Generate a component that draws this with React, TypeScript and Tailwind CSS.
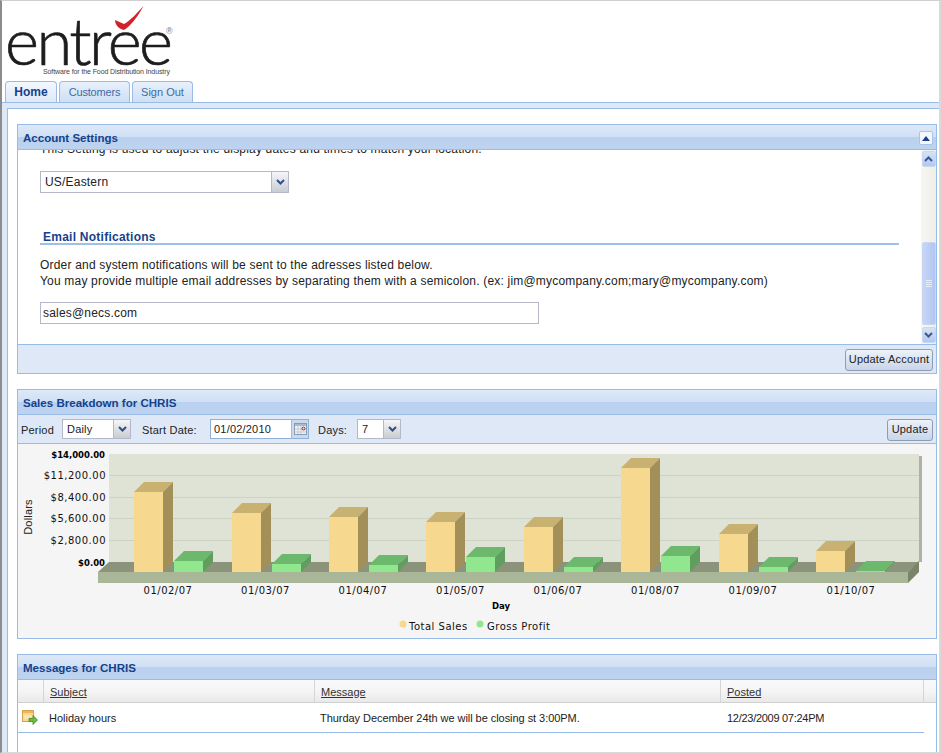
import React from "react";

const gridY = [475, 497, 518, 540];
const bars: [number, number, number, string][] = [
  [134, 492, 561, "01/02/07"],
  [232, 513, 564, "01/03/07"],
  [329, 517, 565, "01/04/07"],
  [426, 522, 557, "01/05/07"],
  [524, 527, 567, "01/06/07"],
  [621, 468, 556, "01/08/07"],
  [719, 534, 567, "01/09/07"],
  [816, 551, 571, "01/10/07"],
];
const labelX = [168, 265.5, 363, 460.5, 558, 655.5, 753, 851];

function Bar({ x, top, front, side, cap }: { x: number; top: number; front: string; side: string; cap: string }) {
  const w = 29;
  return (
    <g>
      <polygon points={`${x},${top} ${x + 10},${top - 10} ${x + w + 10},${top - 10} ${x + w},${top}`} fill={cap} />
      <polygon points={`${x + w},${top} ${x + w + 10},${top - 10} ${x + w + 10},562 ${x + w},572`} fill={side} />
      <rect x={x} y={top} width={w} height={572 - top} fill={front} />
    </g>
  );
}

function Chart() {
  const t = "font-['DejaVu_Sans',sans-serif] text-[10px] tracking-[0.5px] fill-[#111111]";
  const tb = "font-['DejaVu_Sans',sans-serif] text-[8.5px] font-bold fill-[#000000]";
  return (
    <svg viewBox="18 444 918 194" className="block h-[194px] w-[918px]">
      <rect x="919" y="456" width="3" height="106" fill="#aeb1a6" />
      <rect x="109" y="454" width="810" height="108" fill="#dee3d5" />
      {gridY.map((y) => (
        <rect key={y} x="109" y={y} width="810" height="1" fill="#cdd3c2" />
      ))}
      <polygon points="109,562 919,562 908,572 98,572" fill="#8b937b" />
      <rect x="98" y="572" width="810" height="11" fill="#a9b697" />
      <polygon points="908,572 919,561 919,572 908,583" fill="#7b8368" />
      {bars.map(([x, y, g]) => (
        <g key={x}>
          <Bar x={x} top={y} front="#f6d98e" side="#a39059" cap="#c9b171" />
          <Bar x={x + 40} top={g} front="#90e78d" side="#5f9e5e" cap="#6cb86d" />
        </g>
      ))}
      <text x="105" y="458" textAnchor="end" className={tb}>$14,000.00</text>
      <text x="106" y="479" textAnchor="end" className={t}>$11,200.00</text>
      <text x="106" y="501" textAnchor="end" className={t}>$8,400.00</text>
      <text x="106" y="522" textAnchor="end" className={t}>$5,600.00</text>
      <text x="106" y="544" textAnchor="end" className={t}>$2,800.00</text>
      <text x="105" y="566" textAnchor="end" className={tb}>$0.00</text>
      <text transform="translate(32 517) rotate(-90)" textAnchor="middle" className="font-['Liberation_Sans',sans-serif] text-[11px] tracking-[0.2px] fill-[#222222]">Dollars</text>
      {bars.map(([x, , , l], i) => (
        <text key={l} x={labelX[i]} y="594" textAnchor="middle" className={t}>{l}</text>
      ))}
      <text x="501" y="609" textAnchor="middle" className={tb}>Day</text>
      <circle cx="403" cy="624" r="3.5" fill="#f6d98e" />
      <text x="409" y="630" className={t}>Total Sales</text>
      <circle cx="480" cy="624" r="3.5" fill="#90e78d" />
      <text x="487" y="630" className={t}>Gross Profit</text>
    </svg>
  );
}

function Chevron() {
  return (
    <svg width="9" height="6" viewBox="0 0 9 6">
      <path d="M1 1l3.5 3.5L8 1" fill="none" stroke="#2f4f86" strokeWidth="2" />
    </svg>
  );
}

function Select({ value, w, text = "text-[11px] leading-[19px] tracking-[0.2px]", h = "h-5" }: { value: string; w: string; text?: string; h?: string }) {
  return (
    <div className={`flex ${w} ${h} items-stretch border border-[#b5b8c8] bg-white`}>
      <span className={`flex-1 truncate pl-1 ${text} text-[#222222]`}>{value}</span>
      <span className="flex w-[17px] items-center justify-center border-l border-[#b5b8c8] bg-[linear-gradient(to_bottom,#f4f6f9,#c9ccd2)]">
        <Chevron />
      </span>
    </div>
  );
}

function Button({ label, w }: { label: string; w: string }) {
  return (
    <button className={`mt-[1px] h-[22px] ${w} rounded-[3px] border border-[#8d9db3] bg-[linear-gradient(to_bottom,#eef3fa,#d9e3f1_50%,#c9d6e8)] text-[11px] tracking-[0.2px] text-[#222222]`}>
      {label}
    </button>
  );
}

function Panel({ title, h, collapse, children }: { title: string; h: string; collapse?: boolean; children: React.ReactNode }) {
  return (
    <section className={`flex ${h} w-[920px] shrink-0 flex-col overflow-hidden border border-[#99bbe8] bg-white`}>
      <header className="relative z-10 flex h-[25px] shrink-0 items-center border-b border-[#99bbe8] bg-[linear-gradient(to_bottom,#dce9f8,#d0e0f5_48%,#b9d0ef_48%,#bdd3f0)] pl-[5px] pt-[4px]">
        <h2 className="text-[11.55px] font-bold leading-none text-[#15428b]">{title}</h2>
        {collapse && (
          <span className="absolute right-[3px] top-[6px] flex h-[14px] w-[14px] items-center justify-center rounded-[2px] border border-[#a9c4ea] bg-[#f3f8fe]">
            <svg width="8" height="5" viewBox="0 0 8 5"><path d="M4 0l4 5H0z" fill="#1f3f86" /></svg>
          </span>
        )}
      </header>
      {children}
    </section>
  );
}

function Scrollbar() {
  const btn = "flex h-[16px] w-[14px] items-center justify-center rounded-[2px] border border-[#c9d9f0] bg-[linear-gradient(to_bottom,#d5e2f8,#b3c8f0)]";
  const chev = <path d="M1 5l3.5-3.5L8 5" fill="none" stroke="#3c5a8c" strokeWidth="2" />;
  return (
    <div className="flex w-[15px] shrink-0 flex-col items-center bg-[linear-gradient(to_right,#f7f6f0,#efeee8)] pt-[1px]">
      <span className={btn}><svg width="9" height="6" viewBox="0 0 9 6">{chev}</svg></span>
      <div className="mt-[75px] flex h-[83px] w-[14px] items-center justify-center rounded-[2px] border border-[#c9d5f2] bg-[linear-gradient(to_right,#c6d6f8,#b2c6f2)]">
        <div className="flex flex-col gap-[1px]">
          <i className="block h-px w-[6px] bg-[#e6edfb]" />
          <i className="block h-px w-[6px] bg-[#e6edfb]" />
          <i className="block h-px w-[6px] bg-[#e6edfb]" />
          <i className="block h-px w-[6px] bg-[#e6edfb]" />
        </div>
      </div>
      <span className={`${btn} mt-[2px]`}>
        <svg width="9" height="6" viewBox="0 0 9 6"><path d="M1 1l3.5 3.5L8 1" fill="none" stroke="#3c5a8c" strokeWidth="2" /></svg>
      </span>
    </div>
  );
}

function AccountSettings() {
  return (
    <Panel title="Account Settings" h="h-[250px]" collapse>
      <div className="flex h-[194px] shrink-0">
        <div className="min-w-0 flex-1 overflow-hidden pl-[22px] text-[12px] leading-[16px] tracking-[0.19px] text-[#222222]">
          <p className="-mt-[9px] whitespace-nowrap">This Setting is used to adjust the display dates and times to match your location.</p>
          <Select value="US/Eastern" w="w-[249px] mt-[14px]" h="h-[22px]" text="text-[12px] leading-[20px] tracking-[0.19px]" />
          <h3 className="mt-[38px] w-[859px] border-b-2 border-[#9fc0e6] pl-[3px] text-[12px] font-bold leading-[12px] tracking-[0.25px] text-[#15428b]">Email Notifications</h3>
          <p className="mt-[12px]">Order and system notifications will be sent to the adresses listed below.</p>
          <p>You may provide multiple email addresses by separating them with a semicolon. (ex: jim@mycompany.com;mary@mycompany.com)</p>
          <div className="mt-[13px] h-[22px] w-[499px] border border-[#b5b8c8] pl-[2px] leading-[20px]">sales@necs.com</div>
        </div>
        <Scrollbar />
      </div>
      <footer className="flex flex-1 items-center justify-end border-t border-[#99bbe8] bg-[#dfe8f6] pr-[3px]">
        <Button label="Update Account" w="w-[88px]" />
      </footer>
    </Panel>
  );
}

function SalesBreakdown() {
  return (
    <Panel title="Sales Breakdown for CHRIS" h="h-[250px]">
      <div className="flex h-[29px] shrink-0 items-center border-b border-[#99bbe8] bg-[#dfe8f6] px-[3px] text-[11px] tracking-[0.2px] text-[#222222]">
        <span className="w-[41px] pt-[2px]">Period</span>
        <Select value="Daily" w="w-[69px]" />
        <span className="ml-[11px] w-[68px] pt-[2px]">Start Date:</span>
        <div className="flex h-[20px] w-[99px] border border-[#8fb0d9] bg-white">
          <span className="flex-1 pl-[3px] leading-[19px]">01/02/2010</span>
          <span className="flex w-[17px] items-center justify-center border-l border-[#99bbe8] bg-[#c9d9ee]">
            <svg width="13" height="12" viewBox="0 0 13 12">
              <rect x=".5" y=".5" width="12" height="11" fill="#f3f3f3" stroke="#8a9ab0" />
              <rect x="1" y="1" width="11" height="2" fill="#a9b9d0" />
              <path d="M1 6h11M1 9h11M4 3v8M7 3v8" stroke="#c3c9d2" />
              <circle cx="9.5" cy="5.5" r="1.5" fill="none" stroke="#9c2030" />
            </svg>
          </span>
        </div>
        <span className="ml-[9px] w-[39px] pt-[2px]">Days:</span>
        <Select value="7" w="w-[44px]" />
        <span className="ml-auto"><Button label="Update" w="w-[46px]" /></span>
      </div>
      <div className="flex-1 bg-[#f5f5f5]"><Chart /></div>
    </Panel>
  );
}

function MessageIcon() {
  return (
    <svg width="16" height="16" viewBox="0 0 16 16">
      <rect x=".5" y=".5" width="11" height="11" fill="#fbd98a" stroke="#d9a24e" />
      <rect x="1" y="1" width="10" height="2" fill="#f2b35e" />
      <path d="M2 6h7M2 8h5" stroke="#f5f0d5" />
      <path d="M7 8.5h4V5.5l4.5 4.5-4.5 4.5v-3H7z" fill="#6fbb3f" stroke="#3f8a2a" strokeWidth=".8" />
    </svg>
  );
}

function Messages() {
  const th = "flex h-full items-center border-r border-[#d5d5d5] pl-[6px] pt-[2px] text-[11px] leading-none text-[#333333] underline";
  return (
    <Panel title="Messages for CHRIS" h="h-[110px]">
      <div className="grid h-[23px] shrink-0 grid-cols-[26px_271px_406px_203px_1fr] border-b border-[#d0d0d0] bg-[linear-gradient(to_bottom,#f9f9f9,#f5f5f5_50%,#e9e9e9)]">
        <div className="border-r border-[#d5d5d5]" />
        <div className={th}>Subject</div>
        <div className={th}>Message</div>
        <div className={th}>Posted</div>
        <div />
      </div>
      <div className="grid h-[30px] w-[906px] shrink-0 grid-cols-[26px_271px_406px_203px] items-center border-b border-[#99bbe8] pt-[1px] text-[11px] text-[#222222]">
        <div className="pl-[4px]"><MessageIcon /></div>
        <div className="pl-[5px]">Holiday hours</div>
        <div className="whitespace-nowrap pl-[5px] tracking-[-0.05px]">Thurday December 24th we will be closing st 3:00PM.</div>
        <div className="pl-[6px] tracking-[-0.28px]">12/23/2009 07:24PM</div>
      </div>
    </Panel>
  );
}

function Logo() {
  return (
    <div className="relative h-[80px]">
      <span className="absolute left-[3px] top-[14px] font-['Lato',sans-serif] text-[65px] font-light leading-[50px] tracking-[-2.5px] text-[#1d1d1d] [-webkit-text-stroke:0.7px_#1d1d1d]">entree</span>
      <svg className="absolute left-0 top-0" width="180" height="40" viewBox="0 0 180 40">
        <path d="M141.5 5C134 13 128 20 122 23C119 22 116 20 113 19C113 24 117 28 122 29C129 25 136 15 141.5 5Z" fill="#d3202a" />
      </svg>
      <span className="absolute left-[164px] top-[26px] text-[9px] leading-none text-[#777777]">®</span>
      <span className="absolute left-[41px] top-[66px] whitespace-nowrap text-[7px] leading-[9px] tracking-[-0.1px] text-[#444444]">Software for the Food Distribution Industry</span>
    </div>
  );
}

function Tabs() {
  const base = "flex h-[21px] items-center justify-center rounded-t-[4px] border border-b-0 border-[#99bbe8]";
  return (
    <nav className="flex h-[21px] items-start pl-[3px]">
      <span className={`${base} w-[52px] bg-[linear-gradient(to_bottom,#f3f8fe,#dfe8f6)] text-[12px] font-bold text-[#15428b]`}>Home</span>
      <span className={`${base} ml-[2px] w-[71px] bg-[linear-gradient(to_bottom,#e8f0fb,#cfdff5)] text-[11px] tracking-[-0.2px] text-[#416aa3]`}>Customers</span>
      <span className={`${base} ml-[2px] w-[61px] bg-[linear-gradient(to_bottom,#e8f0fb,#cfdff5)] text-[11px] text-[#416aa3]`}>Sign Out</span>
    </nav>
  );
}

export default function App() {
  return (
    <div className="flex h-[753px] w-[941px] flex-col overflow-hidden border-b-[1px] border-l-2 border-r-2 border-t-[1px] border-b-[#d9d9d9] border-l-[#8c8c8c] border-r-[#d9d9d9] border-t-[#cfcfcf] bg-white font-['Liberation_Sans',sans-serif]">
      <Logo />
      <Tabs />
      <main className="flex min-h-0 flex-1 flex-col border-t border-[#99bbe8] bg-[#dfe8f6] pl-[5px] pt-[5px]">
        <div className="flex min-h-0 flex-1 flex-col gap-[15px] overflow-hidden border-l border-t border-[#99bbe8] bg-white pl-[9px] pt-[15px]">
          <AccountSettings />
          <SalesBreakdown />
          <Messages />
        </div>
      </main>
    </div>
  );
}
